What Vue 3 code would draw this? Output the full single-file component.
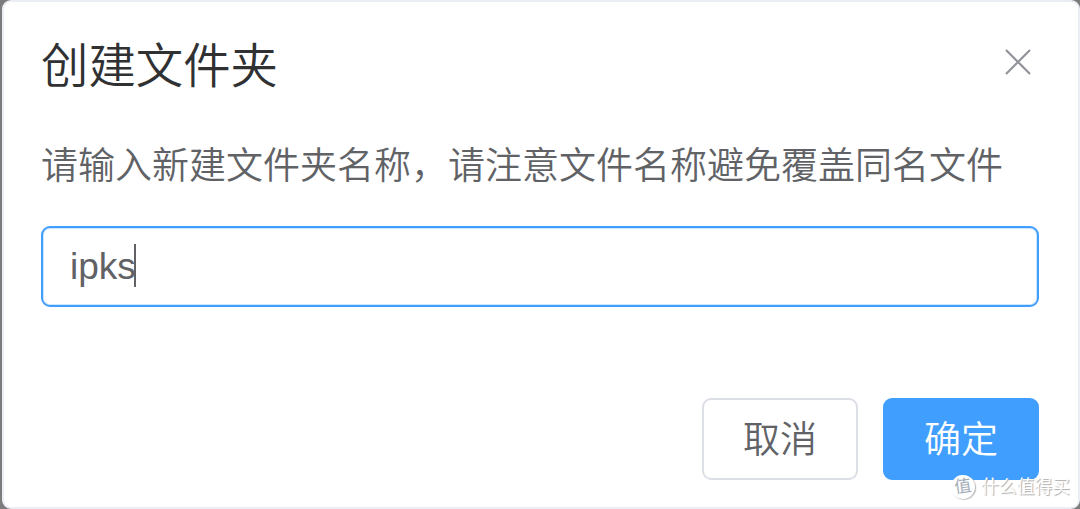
<template>
  <div class="page">
    <div class="message-box">
      <!-- 标题栏 -->
      <div class="box-header">
        <span class="box-title">创建文件夹</span>
        <button class="close-btn" aria-label="关闭">
          <svg viewBox="0 0 26 26" width="26" height="26">
            <path d="M1 1L25 25M25 1L1 25" />
          </svg>
        </button>
      </div>

      <!-- 提示与输入 -->
      <p class="box-message">请输入新建文件夹名称，请注意文件名称避免覆盖同名文件</p>
      <div class="box-input">
        <span>{{ folderName }}</span>
        <i class="caret"></i>
      </div>

      <!-- 操作按钮 -->
      <div class="box-actions">
        <button class="btn">取消</button>
        <button class="btn primary">确定</button>
      </div>
    </div>

    <!-- 水印 -->
    <div class="watermark">
      <span class="mark-logo">值</span>
      <span class="mark-text">什么值得买</span>
    </div>
  </div>
</template>

<script setup>
import { ref } from 'vue'

const folderName = ref('ipks')
</script>

<style>
body {
  margin: 0;
  overflow: hidden;
}
</style>

<style scoped>
.page {
  position: relative;
  height: 509px;
  padding-left: 2px;
  box-sizing: border-box;
  background-color: #7c7c7c;
  font-family: 'Liberation Sans', 'Noto Sans CJK SC', sans-serif;
}

.message-box {
  display: flex;
  flex-direction: column;
  height: 100%;
  padding: 39px 39px 27px 37px;
  box-sizing: border-box;
  border: 2px solid #ebeef5;
  border-radius: 9px;
  background-color: #fff;
}

/* 标题栏 */
.box-header {
  display: flex;
  justify-content: space-between;
  height: 52px;
}

.box-title {
  font-size: 47.4px;
  font-weight: 350;
  line-height: 52px;
  color: #303133;
}

.close-btn {
  width: 26px;
  height: 26px;
  margin: 8px 8px 0 0;
  padding: 0;
  border: none;
  background: none;
}

.close-btn svg {
  display: block;
  fill: none;
  stroke: #909399;
  stroke-width: 2.2;
}

.box-message {
  margin: 48px 0 0;
  font-size: 37px;
  font-weight: 350;
  line-height: 52px;
  white-space: nowrap;
  color: #606266;
}

.box-input {
  display: flex;
  align-items: center;
  height: 81px;
  margin-top: 33px;
  padding: 0 27px;
  box-sizing: border-box;
  border: 2px solid #409eff;
  border-radius: 9px;
  box-shadow: inset 0 0 0 1px #cfe6ff;
  font-size: 37px;
  color: #606266;
}

.caret {
  width: 2px;
  height: 43px;
  margin: 0 0 2px -2px;
  background-color: #606266;
}

/* 操作按钮 */
.box-actions {
  display: flex;
  justify-content: flex-end;
  gap: 25px;
  margin-top: auto;
}

.btn {
  width: 156px;
  height: 82px;
  padding: 0 0 4px;
  border: 2px solid #dcdfe6;
  border-radius: 9px;
  background-color: #fff;
  font-family: inherit;
  font-size: 37px;
  font-weight: 350;
  color: #606266;
}

.btn.primary {
  border-color: #409eff;
  background-color: #409eff;
  color: #fff;
}

/* 水印 */
.watermark {
  position: absolute;
  right: 10px;
  bottom: 9px;
  display: flex;
  align-items: center;
  gap: 6px;
  height: 26px;
}

.mark-logo {
  width: 24px;
  height: 24px;
  border-radius: 50%;
  background-color: #fff;
  box-shadow: 1px 1px 1px #bbb;
  font-size: 17px;
  line-height: 23px;
  text-align: center;
  color: #a3adb8;
  transform: rotate(-8deg);
}

.mark-text {
  font-size: 17.8px;
  line-height: 26px;
  color: #fff;
  text-shadow: 1px 1px 1px #aaa;
}
</style>
